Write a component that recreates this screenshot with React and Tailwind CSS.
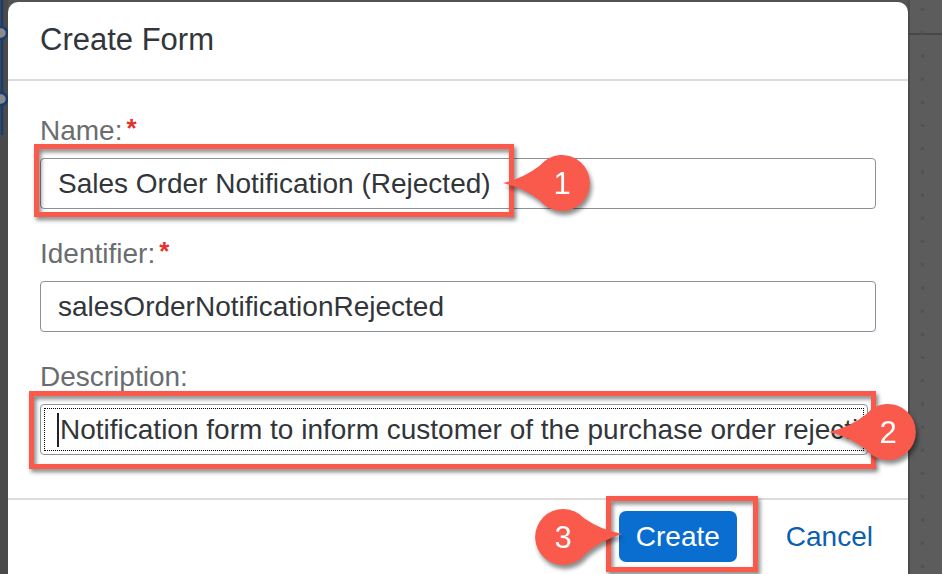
import React from "react";

function Callout({ cx, cy, n, dir = "left", rot = 0 }) {
  const angle = dir === "left" ? 0 : 180;
  return (
    <svg
      className="absolute [filter:drop-shadow(2px_4px_2px_rgba(0,0,0,0.45))]"
      style={{ left: cx - 70, top: cy - 40 }}
      width="140"
      height="80"
      viewBox="-70 -40 140 80"
    >
      <g transform={`rotate(${angle + rot})`}>
        <path
          d="M -59 0 Q -38 -5 -22 -17.5 A 28 28 0 1 1 -22 17.5 Q -38 5 -59 0 Z"
          fill="#fa5a4b"
        />
      </g>
      <text
        x="0"
        y="11"
        textAnchor="middle"
        fill="#ffffff"
        fontSize="31"
        fontFamily="'Liberation Sans', Arial, sans-serif"
      >
        {n}
      </text>
    </svg>
  );
}

function RedBox({ className }) {
  return (
    <div
      className={
        "absolute border-[5px] border-[#fa5a4b] [filter:drop-shadow(2px_3px_2px_rgba(0,0,0,0.5))] " +
        className
      }
    />
  );
}

function Label({ children, required }) {
  return (
    <div className="h-[36px] leading-[36px] text-[28px] text-[#6a6d70] flex items-start">
      <span>{children}</span>
      {required && (
        <span className="ml-[4px] text-[26px] font-bold text-[#e5322b] leading-[30px]">*</span>
      )}
    </div>
  );
}

export default function App() {
  const dots = [];
  for (let i = 0; i < 25; i++) dots.push(8 + i * 23.2);
  return (
    <div className="relative w-[942px] h-[574px] overflow-hidden bg-[#535353] flex font-['Liberation_Sans',Arial,sans-serif]">
      {/* left strip */}
      <div className="w-[8px] shrink-0 bg-[#4a4a4a]">
        <svg width="8" height="574">
          <path d="M 2 0 L 2 135" stroke="#1b3c70" strokeWidth="2.5" />
          <circle cx="1" cy="33" r="6" fill="#8a8a8a" stroke="#1b3c70" strokeWidth="2.5" />
          <circle cx="1" cy="99" r="6" fill="#8a8a8a" stroke="#1b3c70" strokeWidth="2.5" />
        </svg>
      </div>

      {/* dialog */}
      <div className="w-[900px] shrink-0 mt-[2px] bg-white rounded-t-[10px] flex flex-col">
        <div className="h-[79px] flex items-center px-8 text-[31px] text-[#32363a] border-b-2 border-[#dcdcdc]">
          Create Form
        </div>
        <div className="px-8 pt-[32px] pb-[43px] flex flex-col gap-[27px]">
          <div className="flex flex-col gap-[9px]">
            <Label required>Name:</Label>
            <div className="h-[51px] border border-[#89919a] rounded-[4px] px-[17px] flex items-center text-[28px] text-[#32363a] whitespace-nowrap overflow-hidden">
              Sales Order Notification (Rejected)
            </div>
          </div>
          <div className="flex flex-col gap-[9px]">
            <Label required>Identifier:</Label>
            <div className="h-[51px] border border-[#89919a] rounded-[4px] px-[17px] flex items-center text-[28px] text-[#32363a] whitespace-nowrap overflow-hidden">
              salesOrderNotificationRejected
            </div>
          </div>
          <div className="flex flex-col gap-[9px]">
            <Label>Description:</Label>
            <div className="relative h-[51px] mr-[8px] border border-[#89919a] rounded-[4px] pl-[16px] pr-[6px] flex items-center text-[28px] text-[#32363a] whitespace-nowrap overflow-hidden">
              <div className="absolute inset-[3px] border border-dotted border-black" />
              <span className="w-[2px] h-[34px] bg-[#222] mr-[1px] shrink-0" />
              <span>Notification form to inform customer of the purchase order rejection</span>
            </div>
          </div>
        </div>
        <div className="border-t-2 border-[#dcdcdc] flex justify-end items-start pt-[11px] pr-[35px] flex-1">
          <button className="h-[51px] w-[118px] rounded-[7px] bg-[#0a6ed1] text-white text-[28px]">
            Create
          </button>
          <button className="ml-[49px] h-[51px] text-[28px] text-[#0b5fb0]">Cancel</button>
        </div>
      </div>

      {/* right strip */}
      <div className="flex-1 bg-[#5c5c5c]">
        <svg width="34" height="574">
          <rect x="0" y="0" width="2" height="574" fill="#4c4c4c" />
          <rect x="0" y="33" width="34" height="2" fill="#474747" />
          {dots.map((y, i) => (
            <rect key={i} x="13" y={y} width="3" height="3" fill="#515151" />
          ))}
        </svg>
      </div>

      {/* annotations */}
      <RedBox className="left-[34px] top-[144px] w-[480px] h-[73px]" />
      <RedBox className="left-[29px] top-[391px] w-[847px] h-[78px]" />
      <RedBox className="left-[606px] top-[496px] w-[152px] h-[76px]" />
      <Callout cx={562} cy={183} n="1" />
      <Callout cx={888} cy={432} n="2" />
      <Callout cx={563} cy={537} n="3" dir="right" rot={-3} />
    </div>
  );
}
